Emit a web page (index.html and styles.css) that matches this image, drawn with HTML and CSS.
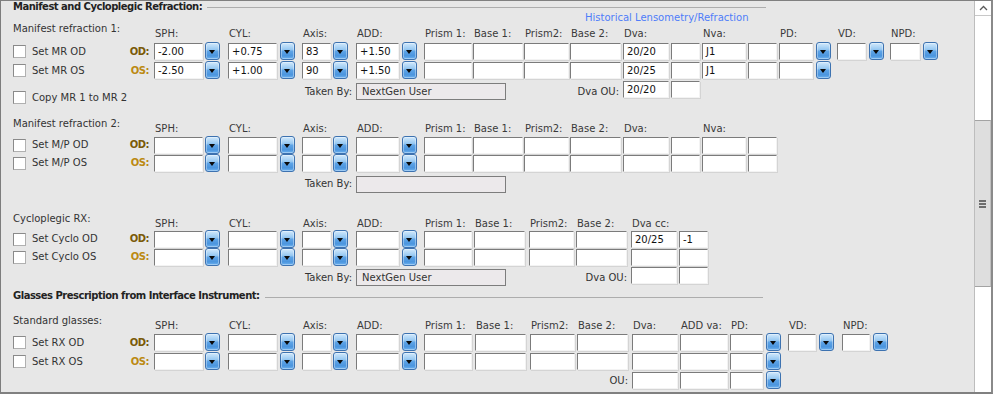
FILE: index.html
```html
<!DOCTYPE html>
<html>
<head>
<meta charset="utf-8">
<link rel="stylesheet" href="styles.css">
</head>
<body>
<div class="win">
  <div class="content">
    <div class="hdr h1"><span>Manifest and Cycloplegic Refraction:</span><i class="rule"></i></div>
    <div class="link">Historical Lensometry/Refraction</div>

    <div class="sec s1">
      <div class="row g1 h14">
        <div class="title">Manifest refraction 1:</div><div></div>
        <div class="lbl sp2">SPH:</div><div class="lbl sp2">CYL:</div><div class="lbl sp2">Axis:</div><div class="lbl sp2">ADD:</div>
        <div class="lbl">Prism 1:</div><div class="lbl">Base 1:</div><div class="lbl">Prism2:</div><div class="lbl">Base 2:</div>
        <div class="lbl sp2">Dva:</div><div class="lbl sp2">Nva:</div><div class="lbl sp2">PD:</div><div class="lbl sp2">VD:</div><div class="lbl sp2">NPD:</div>
      </div>
      <div class="row g1 h19">
        <div class="chk"><span class="cb"></span>Set MR OD</div><div class="eye od">OD:</div>
        <div class="in w49">-2.00</div><div class="dd"></div>
        <div class="in w49">+0.75</div><div class="dd"></div>
        <div class="in w29">83</div><div class="dd"></div>
        <div class="in w43">+1.50</div><div class="dd"></div>
        <div class="in w48"></div><div class="in w50"></div><div class="in w45"></div><div class="in w51"></div>
        <div class="in w46">20/20</div><div class="in w29"></div>
        <div class="in w44">J1</div><div class="in w29"></div>
        <div class="in w34"></div><div class="dd"></div>
        <div class="in w29"></div><div class="dd"></div>
        <div class="in w30"></div><div class="dd"></div>
      </div>
      <div class="row g1 h19">
        <div class="chk"><span class="cb"></span>Set MR OS</div><div class="eye os">OS:</div>
        <div class="in w49">-2.50</div><div class="dd"></div>
        <div class="in w49">+1.00</div><div class="dd"></div>
        <div class="in w29">90</div><div class="dd"></div>
        <div class="in w43">+1.50</div><div class="dd"></div>
        <div class="in w48"></div><div class="in w50"></div><div class="in w45"></div><div class="in w51"></div>
        <div class="in w46">20/25</div><div class="in w29"></div>
        <div class="in w44">J1</div><div class="in w29"></div>
        <div class="in w34"></div><div class="dd"></div>
      </div>
      <div class="row g1 h21">
        <div class="chk cp"><span class="cb"></span>Copy MR 1 to MR 2</div><div class="sp5"></div>
        <div class="rt sp2">Taken By:</div><div class="tb sp4">NextGen User</div>
        <div class="rt sp2">Dva OU:</div><div class="in w46">20/20</div><div class="in w29"></div>
      </div>
    </div>

    <div class="sec s2">
      <div class="row g1 h13">
        <div class="title">Manifest refraction 2:</div><div></div>
        <div class="lbl sp2">SPH:</div><div class="lbl sp2">CYL:</div><div class="lbl sp2">Axis:</div><div class="lbl sp2">ADD:</div>
        <div class="lbl">Prism 1:</div><div class="lbl">Base 1:</div><div class="lbl">Prism2:</div><div class="lbl">Base 2:</div>
        <div class="lbl sp2">Dva:</div><div class="lbl sp2">Nva:</div>
      </div>
      <div class="row g1 h18">
        <div class="chk"><span class="cb"></span>Set M/P OD</div><div class="eye od">OD:</div>
        <div class="in w49"></div><div class="dd"></div>
        <div class="in w49"></div><div class="dd"></div>
        <div class="in w29"></div><div class="dd"></div>
        <div class="in w43"></div><div class="dd"></div>
        <div class="in w48"></div><div class="in w50"></div><div class="in w45"></div><div class="in w51"></div>
        <div class="in w46"></div><div class="in w29"></div>
        <div class="in w44"></div><div class="in w29"></div>
      </div>
      <div class="row g1 h18">
        <div class="chk"><span class="cb"></span>Set M/P OS</div><div class="eye os">OS:</div>
        <div class="in w49"></div><div class="dd"></div>
        <div class="in w49"></div><div class="dd"></div>
        <div class="in w29"></div><div class="dd"></div>
        <div class="in w43"></div><div class="dd"></div>
        <div class="in w48"></div><div class="in w50"></div><div class="in w45"></div><div class="in w51"></div>
        <div class="in w46"></div><div class="in w29"></div>
        <div class="in w44"></div><div class="in w29"></div>
      </div>
      <div class="row g1 h22">
        <div></div><div class="sp5"></div>
        <div class="rt sp2">Taken By:</div><div class="tb tb2 sp4"></div>
      </div>
    </div>

    <div class="sec s3">
      <div class="row g3 h12">
        <div class="title">Cycloplegic RX:</div><div></div>
        <div class="lbl sp2">SPH:</div><div class="lbl sp2">CYL:</div><div class="lbl sp2">Axis:</div><div class="lbl sp2">ADD:</div>
        <div class="lbl">Prism 1:</div><div class="lbl">Base 1:</div><div class="lbl">Prism2:</div><div class="lbl">Base 2:</div>
        <div class="lbl sp2">Dva cc:</div>
      </div>
      <div class="row g3 h18">
        <div class="chk"><span class="cb"></span>Set Cyclo OD</div><div class="eye od">OD:</div>
        <div class="in w49"></div><div class="dd"></div>
        <div class="in w49"></div><div class="dd"></div>
        <div class="in w29"></div><div class="dd"></div>
        <div class="in w43"></div><div class="dd"></div>
        <div class="in w48"></div><div class="in w51"></div><div class="in w45"></div><div class="in w51"></div>
        <div class="in w46">20/25</div><div class="in w29">-1</div>
      </div>
      <div class="row g3 h18">
        <div class="chk"><span class="cb"></span>Set Cyclo OS</div><div class="eye os">OS:</div>
        <div class="in w49"></div><div class="dd"></div>
        <div class="in w49"></div><div class="dd"></div>
        <div class="in w29"></div><div class="dd"></div>
        <div class="in w43"></div><div class="dd"></div>
        <div class="in w48"></div><div class="in w51"></div><div class="in w45"></div><div class="in w51"></div>
        <div class="in w46"></div><div class="in w29"></div>
      </div>
      <div class="row g3 h22">
        <div></div><div class="sp5"></div>
        <div class="rt sp2">Taken By:</div><div class="tb sp4">NextGen User</div>
        <div class="rt sp2">Dva OU:</div><div class="in w46"></div><div class="in w29"></div>
      </div>
    </div>

    <div class="hdr h2"><span>Glasses Prescription from Interface Instrument:</span><i class="rule"></i></div>

    <div class="sec s4">
      <div class="row g4 h13">
        <div class="title">Standard glasses:</div><div></div>
        <div class="lbl sp2">SPH:</div><div class="lbl sp2">CYL:</div><div class="lbl sp2">Axis:</div><div class="lbl sp2">ADD:</div>
        <div class="lbl">Prism 1:</div><div class="lbl">Base 1:</div><div class="lbl">Prism2:</div><div class="lbl">Base 2:</div>
        <div class="lbl">Dva:</div><div class="lbl">ADD va:</div>
        <div class="lbl sp2">PD:</div><div class="lbl sp2">VD:</div><div class="lbl sp2">NPD:</div>
      </div>
      <div class="row g4 h19">
        <div class="chk"><span class="cb"></span>Set RX OD</div><div class="eye od">OD:</div>
        <div class="in w49"></div><div class="dd"></div>
        <div class="in w49"></div><div class="dd"></div>
        <div class="in w29"></div><div class="dd"></div>
        <div class="in w43"></div><div class="dd"></div>
        <div class="in w48"></div><div class="in w51"></div><div class="in w45"></div><div class="in w51"></div>
        <div class="in w46"></div><div class="in w48"></div>
        <div class="in w33"></div><div class="dd"></div>
        <div class="in w28"></div><div class="dd"></div>
        <div class="in w28"></div><div class="dd"></div>
      </div>
      <div class="row g4 h19">
        <div class="chk"><span class="cb"></span>Set RX OS</div><div class="eye os">OS:</div>
        <div class="in w49"></div><div class="dd"></div>
        <div class="in w49"></div><div class="dd"></div>
        <div class="in w29"></div><div class="dd"></div>
        <div class="in w43"></div><div class="dd"></div>
        <div class="in w48"></div><div class="in w51"></div><div class="in w45"></div><div class="in w51"></div>
        <div class="in w46"></div><div class="in w48"></div>
        <div class="in w33"></div><div class="dd"></div>
      </div>
      <div class="row g4 h19">
        <div></div><div class="sp11"></div>
        <div class="rt rt2 sp2">OU:</div>
        <div class="in w46"></div><div class="in w48"></div>
        <div class="in w33"></div><div class="dd"></div>
      </div>
    </div>
  </div>

  <div class="sb">
    <div class="sb-up"><svg width="9" height="6" viewBox="0 0 9 6"><polyline points="1,5 4.5,1.5 8,5" fill="none" stroke="#5a5a5a" stroke-width="1.3"/></svg></div>
    <div class="sb-track t1"></div>
    <div class="sb-thumb"><span></span><span></span><span></span></div>
    <div class="sb-track"></div>
  </div>
</div>
</body>
</html>
```

FILE: styles.css
```css
* { box-sizing: border-box; }
body {
  margin: 0;
  font-family: "DejaVu Sans", sans-serif;
  font-size: 10px;
  line-height: 12px;
  color: #333;
}
.win {
  width: 993px;
  height: 394px;
  display: flex;
  background: #e7e7e7;
  border-top: 1px solid #808080;
  border-left: 1px solid #7d7d7d;
  border-right: 2px solid #8a8a8a;
  border-bottom: 2px solid #808080;
  overflow: hidden;
}
.content {
  flex: 1;
  padding-left: 12px;
  overflow: hidden;
}
.hdr {
  display: flex;
  height: 12px;
  font-weight: bold;
  letter-spacing: -0.5px;
  color: #222;
  white-space: nowrap;
}
.hdr .rule {
  flex: 1;
  height: 1px;
  margin-top: 7px;
  margin-left: 5px;
  background: #adadad;
}
.h1 { margin-top: 0; width: 753px; }
.h1 .rule { margin-top: 6px; }
.h2 { margin-top: 2px; width: 750px; }
.link {
  margin: -1px 0 0 572px;
  height: 12px;
  color: #4f7df9;
  white-space: nowrap;
}
.s1 { margin-top: 4px; }
.s2 { margin-top: 22px; }
.s3 { margin-top: 24px; }
.s4 { margin-top: 18px; }

.row { display: grid; align-items: start; }
.g1 { grid-template-columns: 112px 29px 51px 23px 52px 22px 31px 23px 46px 22px 49px 51px 46px 53px 48px 31px 46px 31px 37px 21px 32px 21px 33px 15px; }
.g3 { grid-template-columns: 112px 29px 51px 23px 52px 22px 31px 23px 46px 22px 50px 55px 47px 55px 48px 29px; }
.g4 { grid-template-columns: 112px 29px 51px 23px 52px 22px 31px 23px 46px 22px 51px 55px 47px 55px 48px 50px 36px 22px 31px 23px 31px 15px; }
.h12 { height: 12px; }
.h13 { height: 13px; }
.h14 { height: 14px; }
.h18 { height: 18px; }
.h19 { height: 19px; }
.h21 { height: 21px; }
.h22 { height: 22px; }
.sp2 { grid-column: span 2; }
.sp4 { grid-column: span 4; }
.sp5 { grid-column: span 5; }
.sp11 { grid-column: span 11; }

.title { margin-top: -5px; white-space: nowrap; color: #333; }
.lbl { padding-left: 1px; white-space: nowrap; color: #3a3a3a; }
.chk {
  display: flex;
  align-items: center;
  align-self: center;
  white-space: nowrap;
  color: #333;
}
.chk.cp { align-self: start; margin-top: 11px; }
.cb {
  flex: none;
  width: 13px;
  height: 13px;
  margin-right: 6px;
  background: #fff;
  border: 1px solid #8a8a8a;
  border-right-color: #b0b0b0;
  border-bottom-color: #b0b0b0;
}
.eye {
  justify-self: end;
  align-self: center;
  margin-right: 5px;
  font-weight: bold;
  letter-spacing: -0.5px;
}
.od { color: #7a5a08; }
.os { color: #bb8a12; }

.in {
  height: 17px;
  margin-top: 1px;
  padding-left: 3px;
  background: #fff;
  border: 1px solid;
  border-color: #7b7b7b #f3f3f3 #f3f3f3 #7b7b7b;
  box-shadow: 1px 1px 0 #d4d4d4;
  line-height: 15px;
  color: #111;
  white-space: nowrap;
  overflow: hidden;
}
.w28 { width: 28px; } .w29 { width: 29px; } .w30 { width: 30px; }
.w33 { width: 33px; } .w34 { width: 34px; } .w43 { width: 43px; }
.w44 { width: 44px; } .w45 { width: 45px; } .w46 { width: 46px; }
.w48 { width: 48px; } .w49 { width: 49px; } .w50 { width: 50px; }
.w51 { width: 51px; }

.dd {
  position: relative;
  width: 15px;
  height: 18px;
  border: 1px solid #3d72b0;
  border-radius: 3px;
  background: linear-gradient(#d2e9fc 0%, #98c9f2 40%, #5da3e6 52%, #4b95de 80%, #6fb3f0 100%);
  box-shadow: inset 0 0 0 1px rgba(255,255,255,0.35);
}
.dd::after {
  content: "";
  position: absolute;
  left: 3px;
  top: 7px;
  border-left: 3.5px solid transparent;
  border-right: 3.5px solid transparent;
  border-top: 4px solid #0a0a0a;
}

.rt {
  justify-self: end;
  padding-right: 4px;
  margin-top: 6px;
  white-space: nowrap;
  color: #333;
}
.rt2 { margin-top: 4px; }
.tb {
  justify-self: start;
  width: 150px;
  height: 17px;
  margin-top: 3px;
  padding-left: 5px;
  background: #ece9eb;
  border: 1px solid #7d7d7d;
  line-height: 15px;
  color: #333;
  white-space: nowrap;
}
.tb2 { margin-top: 4px; }

.sb {
  flex: none;
  width: 17px;
  display: flex;
  flex-direction: column;
  background: #fff;
  border-left: 1px solid #bdbdbd;
}
.sb-up {
  height: 15px;
  border-bottom: 1px solid #c8c8c8;
  display: flex;
  justify-content: center;
  padding-top: 4px;
}
.sb-track { flex: 1; }
.sb-track.t1 { flex: none; height: 104px; }
.sb-thumb {
  height: 167px;
  background: #dedede;
  border-top: 1px solid #a3a3a3;
  border-bottom: 1px solid #a3a3a3;
  border-right: 1px solid #c0c0c0;
  display: flex;
  flex-direction: column;
  align-items: center;
  justify-content: center;
  gap: 1px;
}
.sb-thumb span {
  width: 7px;
  height: 2px;
  background: #6e6e6e;
}
```
